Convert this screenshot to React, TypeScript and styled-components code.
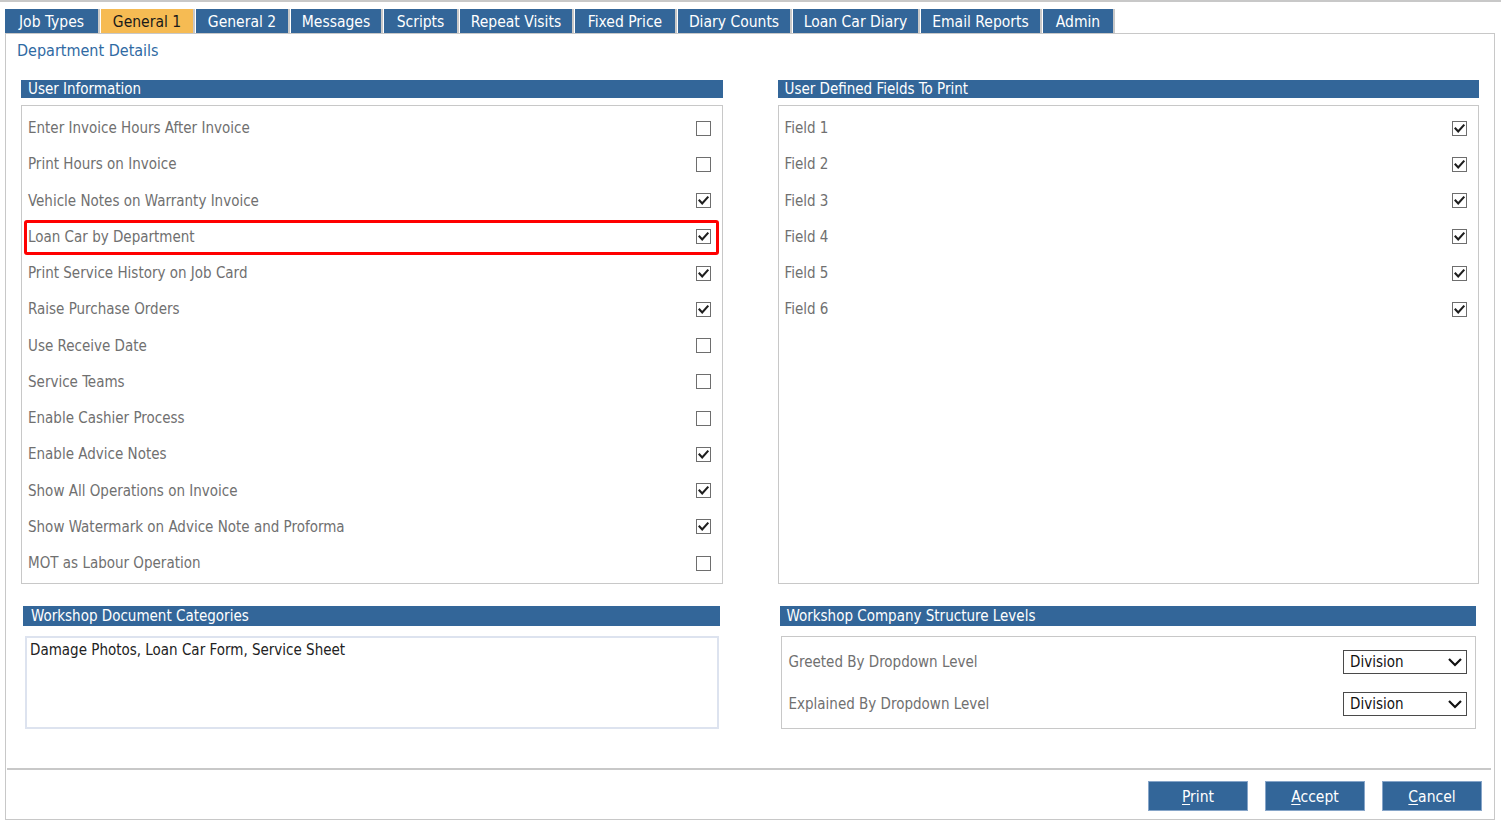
import React from 'react';
import styled, { createGlobalStyle } from 'styled-components';

const GlobalStyle = createGlobalStyle`
  html, body {
    margin: 0;
    padding: 0;
    background: #fff;
  }
  body {
    font-family: "DejaVu Sans Condensed", "DejaVu Sans", "Liberation Sans", sans-serif;
    font-stretch: condensed;
  }
`;

const BLUE = '#336699';
const LINE = '#c8c8c8';

const tabs: [string, number][] = [
  ['Job Types', 93], ['General 1', 92], ['General 2', 92], ['Messages', 90],
  ['Scripts', 73], ['Repeat Visits', 112], ['Fixed Price', 100], ['Diary Counts', 112],
  ['Loan Car Diary', 125], ['Email Reports', 119], ['Admin', 70],
];

const userInfo: [string, boolean][] = [
  ['Enter Invoice Hours After Invoice', false],
  ['Print Hours on Invoice', false],
  ['Vehicle Notes on Warranty Invoice', true],
  ['Loan Car by Department', true],
  ['Print Service History on Job Card', true],
  ['Raise Purchase Orders', true],
  ['Use Receive Date', false],
  ['Service Teams', false],
  ['Enable Cashier Process', false],
  ['Enable Advice Notes', true],
  ['Show All Operations on Invoice', true],
  ['Show Watermark on Advice Note and Proforma', true],
  ['MOT as Labour Operation', false],
];

const fields = ['Field 1', 'Field 2', 'Field 3', 'Field 4', 'Field 5', 'Field 6'];

const Page = styled.div`
  border-top: 2px solid ${LINE};
  height: 822px;
  padding: 7px 6px 0 5px;
  box-sizing: border-box;
`;

const TabBar = styled.div`
  display: flex;
  height: 24px;
`;

const Tab = styled.div<{ $active?: boolean; $w: number }>`
  display: flex;
  align-items: center;
  justify-content: center;
  width: ${p => p.$w}px;
  margin-right: 3px;
  padding-top: 2px;
  box-sizing: border-box;
  background: ${p => (p.$active ? '#f6bb53' : BLUE)};
  color: ${p => (p.$active ? '#1a1a1a' : '#fff')};
  font-size: 15.5px;
  box-shadow: 1px 0 0 ${LINE}, 2px 0 0 ${LINE};
  white-space: nowrap;
`;

const Panel = styled.div`
  border: 1px solid ${LINE};
  height: 787px;
  box-sizing: border-box;
  display: flex;
  flex-direction: column;
`;

const Title = styled.div`
  color: #2f6aa3;
  font-size: 16px;
  padding: 7px 0 0 11px;
  height: 34px;
  box-sizing: border-box;
`;

const Columns = styled.div<{ $pad: string; $gap: number }>`
  display: grid;
  grid-template-columns: 1fr 1fr;
  column-gap: ${p => p.$gap}px;
  padding: ${p => p.$pad};
`;

const Section = styled.div``;

const Header = styled.div<{ $h: number; $mb: number; $indent: number }>`
  background: ${BLUE};
  color: #fff;
  font-size: 15px;
  height: ${p => p.$h}px;
  line-height: ${p => p.$h}px;
  padding-left: ${p => p.$indent}px;
  margin-bottom: ${p => p.$mb}px;
  white-space: nowrap;
`;

const ListBox = styled.div`
  border: 1px solid ${LINE};
  height: 479px;
  box-sizing: border-box;
  padding-top: 4px;
`;

const Row = styled.div<{ $flagged?: boolean }>`
  position: relative;
  display: flex;
  align-items: center;
  justify-content: space-between;
  height: 36.25px;
  padding: 0 11px 0 6px;
  color: #707070;
  font-size: 15px;

  ${p =>
    p.$flagged &&
    `
    &::after {
      content: '';
      position: absolute;
      left: 2px;
      right: 3px;
      top: 1px;
      bottom: 0px;
      border: 3px solid #ff0000;
      border-radius: 3px;
    }
  `}
`;

const CheckWrap = styled.span`
  display: inline-flex;
  width: 15px;
  height: 15px;
`;

const Check = ({ on }: { on: boolean }) => (
  <CheckWrap>
    <svg width="15" height="15" viewBox="0 0 15 15">
      <rect x="0.5" y="0.5" width="14" height="14" fill="#fff" stroke="#6e6e6e" />
      {on && (
        <path d="M3.5 7.6 L6.2 10.4 L11.6 4.4" fill="none" stroke="#1e1e1e" strokeWidth="2.1" strokeLinecap="square" />
      )}
    </svg>
  </CheckWrap>
);

const NotesBox = styled.div`
  border: 2px solid #dde3ef;
  height: 93px;
  margin: 0 1px 0 2px;
  box-sizing: border-box;
  padding: 3px 3px;
  color: #222;
  font-size: 15px;
`;

const LevelBox = styled.div`
  border: 1px solid ${LINE};
  height: 93px;
  margin-left: 1px;
  box-sizing: border-box;
  padding: 13px 8px 0 7px;
  display: flex;
  flex-direction: column;
  gap: 18px;
`;

const LevelRow = styled.div`
  display: flex;
  align-items: center;
  justify-content: space-between;
  color: #707070;
  font-size: 15px;
  height: 24px;
`;

const Select = styled.div`
  width: 124px;
  height: 24px;
  box-sizing: border-box;
  border: 1px solid #4a4a4a;
  display: flex;
  align-items: center;
  justify-content: space-between;
  padding: 0 2px 0 6px;
  color: #111;
  font-size: 15px;
`;

const Footer = styled.div`
  margin-top: auto;
  border-top: 2px solid ${LINE};
  margin-left: 1px;
  margin-right: 3px;
  height: 51px;
  display: flex;
  justify-content: flex-end;
  align-items: flex-start;
  gap: 17px;
  padding: 11px 9px 0 0;
  box-sizing: border-box;
`;

const Button = styled.button`
  width: 100px;
  height: 30px;
  background: ${BLUE};
  border: 1px solid #86a5c9;
  color: #fff;
  font-family: inherit;
  font-stretch: condensed;
  font-size: 15.5px;
  padding: 1px 0 0;
  cursor: pointer;

  u {
    text-decoration-thickness: 1px;
    text-underline-offset: 2px;
  }
`;

const Chevron = () => (
  <svg width="18" height="14" viewBox="0 0 18 14">
    <path d="M3 4 L9 10 L15 4" fill="none" stroke="#111" strokeWidth="2.2" />
  </svg>
);

const LevelSelect = () => (
  <Select>
    Division
    <Chevron />
  </Select>
);

export default function App() {
  return (
    <>
      <GlobalStyle />
      <Page>
        <TabBar>
          {tabs.map(([t, w]) => (
            <Tab key={t} $w={w} $active={t === 'General 1'}>
              {t}
            </Tab>
          ))}
        </TabBar>
        <Panel>
          <Title>Department Details</Title>
          <Columns $pad="12px 15px 0 15px" $gap={55}>
            <Section>
              <Header $h={18} $mb={7} $indent={7}>User Information</Header>
              <ListBox>
                {userInfo.map(([label, on]) => (
                  <Row key={label} $flagged={label === 'Loan Car by Department'}>
                    {label}
                    <Check on={on} />
                  </Row>
                ))}
              </ListBox>
            </Section>
            <Section>
              <Header $h={18} $mb={7} $indent={7}>User Defined Fields To Print</Header>
              <ListBox>
                {fields.map(f => (
                  <Row key={f}>
                    {f}
                    <Check on />
                  </Row>
                ))}
              </ListBox>
            </Section>
          </Columns>
          <Columns $pad="22px 18px 0 17px" $gap={60}>
            <Section>
              <Header $h={20} $mb={10} $indent={8}>Workshop Document Categories</Header>
              <NotesBox>Damage Photos, Loan Car Form, Service Sheet</NotesBox>
            </Section>
            <Section>
              <Header $h={20} $mb={10} $indent={7}>Workshop Company Structure Levels</Header>
              <LevelBox>
                <LevelRow>
                  Greeted By Dropdown Level
                  <LevelSelect />
                </LevelRow>
                <LevelRow>
                  Explained By Dropdown Level
                  <LevelSelect />
                </LevelRow>
              </LevelBox>
            </Section>
          </Columns>
          <Footer>
            <Button><u>P</u>rint</Button>
            <Button><u>A</u>ccept</Button>
            <Button><u>C</u>ancel</Button>
          </Footer>
        </Panel>
      </Page>
    </>
  );
}
